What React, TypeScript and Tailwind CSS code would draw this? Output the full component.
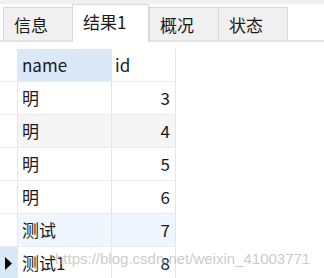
const tabs = [
  { label: '信息', w: 'w-[69px]', active: false },
  { label: '结果1', w: 'w-[77px]', active: true },
  { label: '概况', w: 'w-[69px]', active: false },
  { label: '状态', w: 'w-[70px]', active: false },
];

const rows = [
  { name: '明', id: 3, bg: 'bg-white' },
  { name: '明', id: 4, bg: 'bg-[#f5f5f5]' },
  { name: '明', id: 5, bg: 'bg-white' },
  { name: '明', id: 6, bg: 'bg-white' },
  { name: '测试', id: 7, bg: 'bg-[#f0f6fd]' },
  { name: '测试1', id: 8, bg: 'bg-white', current: true },
];

export default function App() {
  return (
    <div
      className="relative w-[324px] h-[278px] overflow-hidden bg-white text-[#1a1a1a]"
      style={{ fontFamily: '"Noto Sans CJK SC", "Noto Sans", sans-serif' }}
    >
      {/* Tab strip */}
      <div className="h-[42px] border-t-4 border-[#f0f0f0] border-b-2 border-b-[#e3e3e3] flex items-end pl-[3px]">
        {tabs.map((t) =>
          t.active ? (
            <div
              key={t.label}
              className={`${t.w} h-[38px] -mb-[2px] bg-white border-x border-t border-[#d9d9d9] pl-[10px] pt-[5px] text-[17px] leading-[24px]`}
            >
              {t.label}
            </div>
          ) : (
            <div
              key={t.label}
              className={`${t.w} h-[33px] bg-[#f0f0f0] border-l border-t border-[#d9d9d9] last:border-r pl-[10px] pt-[5px] text-[17px] leading-[24px]`}
            >
              {t.label}
            </div>
          )
        )}
      </div>

      {/* Result grid */}
      <div className="mt-[7px] w-[176px] text-[17px]">
        <div className="flex h-[33px] border-b border-[#ececec]">
          <div className="w-[18px] border-r border-[#e6e6e6]" />
          <div className="w-[94px] bg-[#dae8f7] border-r border-[#e6e6e6] pl-[4px] leading-[32px]">name</div>
          <div className="w-[64px] border-r border-[#e6e6e6] pl-[3px] leading-[32px]">id</div>
        </div>
        {rows.map((r, i) => (
          <div key={i} className="flex h-[33px] border-b border-[#ececec]">
            <div
              className={`w-[18px] border-r border-[#e6e6e6] flex items-center pl-[5px] ${
                r.current ? 'bg-[#d9e8f7]' : 'bg-white'
              }`}
            >
              {r.current && (
                <svg width="7" height="13" viewBox="0 0 7 13">
                  <path d="M0 0 L7 6.5 L0 13 Z" fill="#000" />
                </svg>
              )}
            </div>
            <div className={`w-[94px] ${r.bg} border-r border-[#e6e6e6] pl-[4px] leading-[32px]`}>{r.name}</div>
            <div className={`w-[64px] ${r.bg} border-r border-[#e6e6e6] pr-[5px] text-right leading-[32px]`}>{r.id}</div>
          </div>
        ))}
      </div>

      {/* Watermark */}
      <div
        className="absolute left-[55px] top-[250px] text-[15px] leading-[18px] text-[#b4b4b4]/70 whitespace-nowrap"
        style={{ fontFamily: '"Liberation Sans", Arial, sans-serif' }}
      >
        https://blog.csdn.net/weixin_41003771
      </div>
    </div>
  );
}
